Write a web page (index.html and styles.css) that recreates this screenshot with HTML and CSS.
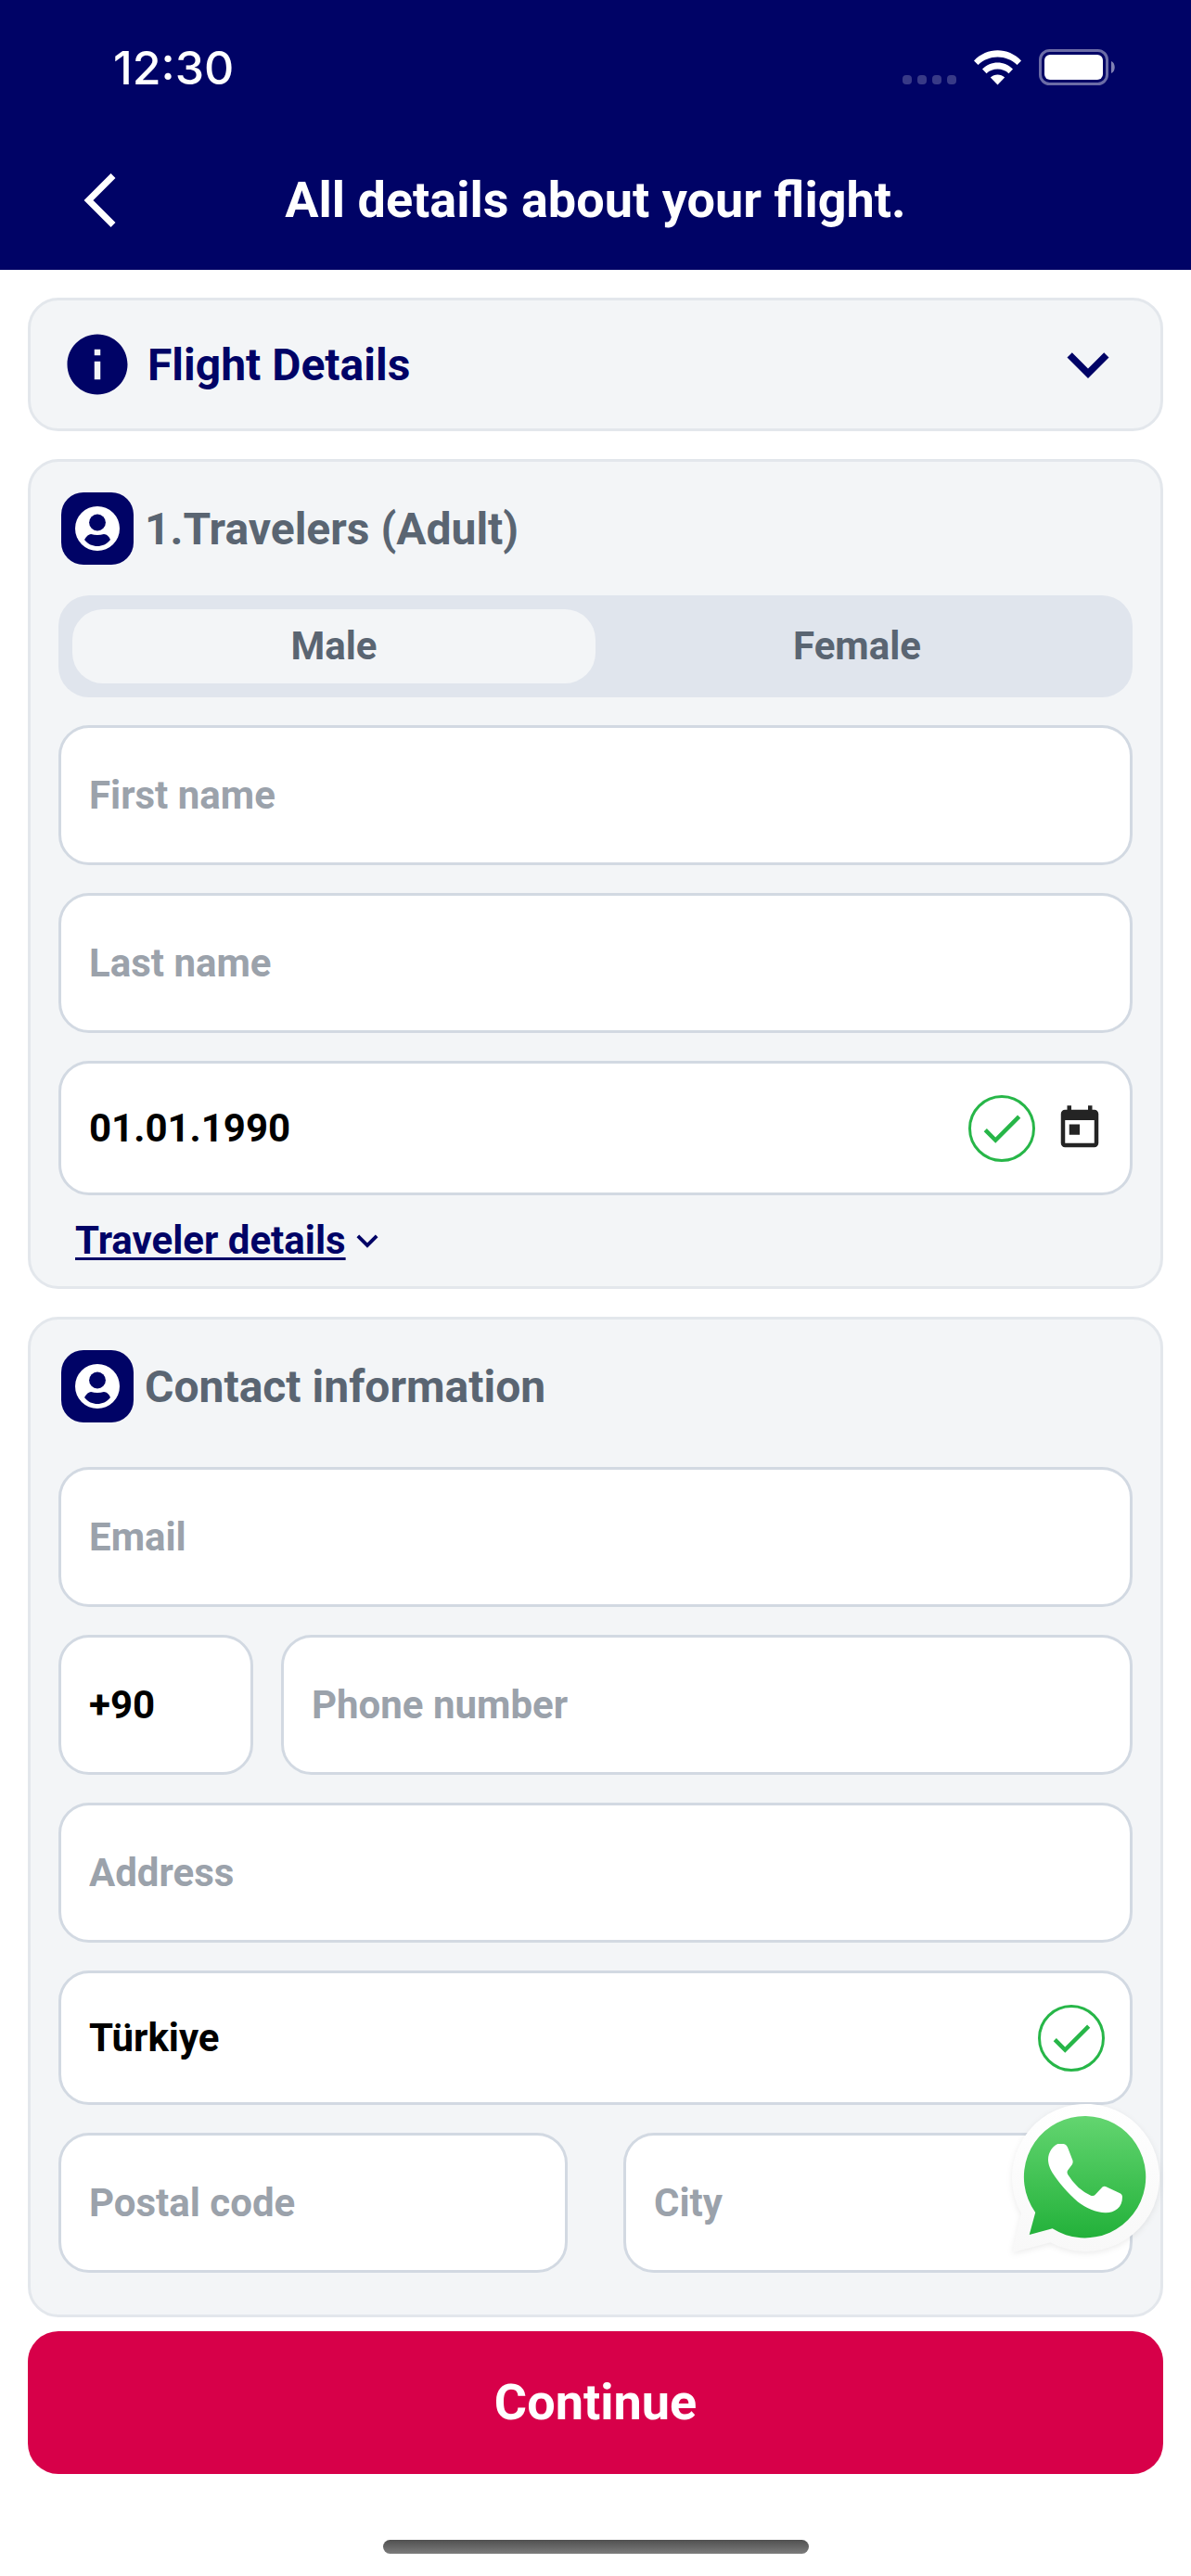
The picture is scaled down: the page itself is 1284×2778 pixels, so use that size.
FILE: index.html
```html
<!DOCTYPE html>
<html lang="en">
<head>
<meta charset="utf-8">
<meta name="viewport" content="width=device-width, initial-scale=1">
<title>Flight details</title>
<link rel="stylesheet" href="styles.css">
</head>
<body>
<header class="header">
  <div class="status">
    <span class="status-time">12:30</span>
    <svg class="status-icons" width="230" height="40" viewBox="0 0 230 40" aria-hidden="true">
      <g fill="#fff" fill-opacity=".22">
        <rect x="0" y="28" width="10" height="10" rx="4"/>
        <rect x="16" y="28" width="10" height="10" rx="4"/>
        <rect x="32" y="28" width="10" height="10" rx="4"/>
        <rect x="48" y="28" width="10" height="10" rx="4"/>
      </g>
      <g fill="#fff">
        <path d="M77 12.500C91 -2.500 114 -2.500 128 12.500L123.500 17C112 5.500 93 5.500 81.500 17Z"/>
        <path d="M86 21.500C95 12 110 12 119 21.500L114.500 26.200C108 20 97 20 90.500 26.200Z"/>
        <path d="M94.800 30.500C99 26.500 106 26.500 110.200 30.500L102.500 38.500Z"/>
        <rect x="153" y="6" width="63" height="27" rx="6"/>
      </g>
      <rect x="148.500" y="1.500" width="72" height="36" rx="10" fill="none" stroke="#fff" stroke-opacity=".42" stroke-width="3"/>
      <path d="M225 13c5 2 5 11 0 13z" fill="#fff" fill-opacity=".5"/>
    </svg>
  </div>
  <div class="titlebar">
    <button class="back" type="button" aria-label="Back">
      <svg width="66" height="66" viewBox="0 0 66 66" aria-hidden="true"><path d="M47 6.500L20.500 33L47 59.500" fill="none" stroke="#fff" stroke-width="7"/></svg>
    </button>
    <h1 class="title">All details about your flight.</h1>
  </div>
</header>

<main class="main">
  <button class="card flight" type="button" aria-expanded="false">
    <svg width="78" height="78" viewBox="0 0 24 24" fill="currentColor" aria-hidden="true"><path d="M12 2C6.480 2 2 6.480 2 12s4.480 10 10 10 10-4.480 10-10S17.520 2 12 2zm1 15h-2v-6h2v6zm0-8h-2V7h2v2z"/></svg>
    <span class="flight-label">Flight Details</span>
    <svg width="90" height="90" viewBox="0 0 24 24" fill="currentColor" aria-hidden="true"><path d="M7.410 8.590L12 13.170l4.590-4.580L18 10l-6 6-6-6z"/></svg>
  </button>

  <section class="card">
    <div class="card-head">
      <svg width="78" height="78" viewBox="0 0 78 78" aria-hidden="true">
        <rect width="78" height="78" rx="24" fill="#000366"/><circle cx="39" cy="39" r="24" fill="#fff"/>
        <circle cx="39" cy="32.500" r="8.900" fill="#000366"/><path d="M25 51C27 47 30 45 32 45Q39 47 46 45C49 45 52 48 53 51C49 56 44 58 39 58C34 58 29 56 25 51Z" fill="#000366"/>
      </svg>
      <h2 class="card-title">1.Travelers (Adult)</h2>
    </div>
    <div class="segment" role="radiogroup" aria-label="Gender">
      <label class="segment-item"><input class="segment-input" type="radio" name="gender" checked><span class="segment-text">Male</span></label>
      <label class="segment-item"><input class="segment-input" type="radio" name="gender"><span class="segment-text">Female</span></label>
    </div>
    <div class="fields">
      <div class="field"><input class="field-input" type="text" placeholder="First name" aria-label="First name"></div>
      <div class="field"><input class="field-input" type="text" placeholder="Last name" aria-label="Last name"></div>
      <div class="field field-filled">
        <input class="field-input" type="text" value="01.01.1990" aria-label="Date of birth">
        <svg width="72" height="72" viewBox="0 0 72 72" aria-hidden="true"><circle cx="36" cy="36" r="34.500" fill="none" stroke="#27b648" stroke-width="3"/><path transform="translate(9 9) scale(2.250)" d="M9 16.170L4.830 12l-1.420 1.410L9 19 21 7l-1.410-1.410z" fill="#27b648"/></svg>
        <button class="icon-button" type="button" aria-label="Open calendar"><svg width="54" height="54" viewBox="0 0 24 24" fill="#242424" aria-hidden="true"><path d="M19 3h-1V1h-2v2H8V1H6v2H5c-1.110 0-1.990.900-1.990 2L3 19c0 1.100.890 2 2 2h14c1.100 0 2-.900 2-2V5c0-1.100-.900-2-2-2zm0 16H5V8h14v11zM7 10h5v5H7z"/></svg></button>
      </div>
    </div>
    <a class="more" href="#traveler-details"><span class="more-text">Traveler details</span><svg width="46" height="46" viewBox="0 0 24 24" fill="currentColor" aria-hidden="true"><path d="M7.410 8.590L12 13.170l4.590-4.580L18 10l-6 6-6-6z"/></svg></a>
  </section>

  <section class="card card-contact">
    <div class="card-head">
      <svg width="78" height="78" viewBox="0 0 78 78" aria-hidden="true">
        <rect width="78" height="78" rx="24" fill="#000366"/><circle cx="39" cy="39" r="24" fill="#fff"/>
        <circle cx="39" cy="32.500" r="8.900" fill="#000366"/><path d="M25 51C27 47 30 45 32 45Q39 47 46 45C49 45 52 48 53 51C49 56 44 58 39 58C34 58 29 56 25 51Z" fill="#000366"/>
      </svg>
      <h2 class="card-title">Contact information</h2>
    </div>
    <div class="fields">
      <div class="field"><input class="field-input" type="email" placeholder="Email" aria-label="Email"></div>
      <div class="phone-row">
        <div class="field"><input class="field-input" type="text" value="+90" aria-label="Country code"></div>
        <div class="field"><input class="field-input" type="tel" placeholder="Phone number" aria-label="Phone number"></div>
      </div>
      <div class="field"><input class="field-input" type="text" placeholder="Address" aria-label="Address"></div>
      <div class="field field-filled">
        <select class="field-input" aria-label="Country"><option>Türkiye</option></select>
        <svg width="72" height="72" viewBox="0 0 72 72" aria-hidden="true"><circle cx="36" cy="36" r="34.500" fill="none" stroke="#27b648" stroke-width="3"/><path transform="translate(9 9) scale(2.250)" d="M9 16.170L4.830 12l-1.420 1.410L9 19 21 7l-1.410-1.410z" fill="#27b648"/></svg>
      </div>
      <div class="city-row">
        <div class="field"><input class="field-input" type="text" placeholder="Postal code" aria-label="Postal code"></div>
        <div class="field"><input class="field-input" type="text" placeholder="City" aria-label="City"></div>
      </div>
    </div>
  </section>
</main>

<footer class="footer">
  <button class="continue" type="submit">Continue</button>
  <div class="home-indicator"></div>
</footer>

<a class="whatsapp" href="#whatsapp" aria-label="Chat on WhatsApp">
  <svg class="whatsapp-icon" width="160" height="164" viewBox="0 0 160 164" aria-hidden="true">
    <defs>
      <linearGradient id="wa-green" x1="0" y1="0" x2="0" y2="1"><stop offset="0" stop-color="#63d570"/><stop offset="1" stop-color="#23b13a"/></linearGradient>
      <linearGradient id="wa-white" x1="0" y1="0" x2="0" y2="1"><stop offset="0" stop-color="#fff"/><stop offset="1" stop-color="#f8f8f8"/></linearGradient>
    </defs>
    <path d="M11 119A79.500 79.500 0 1 1 42.600 150.300L1.200 161Z" fill="url(#wa-white)"/>
    <path d="M26.200 118A65.700 65.700 0 1 1 44.600 135.300L19.700 142Z" fill="url(#wa-green)"/>
    <path d="M50.400 44H56.500Q60 44.500 61.500 49L66.500 62Q67 64 66 66L60.800 73Q60 75 61.200 77Q71 93 86 99.700Q89 100.700 91 98.500L98.500 90.500Q100 89.300 102 90L118 97.500Q120 98.500 120 101C120 113 112 118 102 118.300C92 118 80 113 72 106.500C62 98 50 84 44.500 75C41 69 40 64 40 61C40 53 45 46 50.400 44Z" fill="#fff"/>
  </svg>
</a>
</body>
</html>
```
FILE: styles.css
```css
:root {
  --navy: #000366;
  --slate: #5a6572;
  --panel: #f3f5f7;
  --panel-line: #e3e7ec;
  --field-line: #d2d9e2;
}

* { box-sizing: border-box; }

body {
  margin: 0;
  min-height: 100vh;
  display: flex;
  flex-direction: column;
  background: #fff;
  color: #000;
  font-family: Roboto, sans-serif;
  font-weight: 700;
  font-size: 42px;
  line-height: 48px;
}

button,
input,
select {
  margin: 0;
  padding: 0;
  border: 0;
  background: none;
  color: inherit;
  font: inherit;
}

svg { display: block; flex: none; }

.header {
  padding-bottom: 30px;
  background: var(--navy);
  color: #fff;
}

.status {
  display: flex;
  align-items: center;
  justify-content: space-between;
  height: 146px;
  padding: 0 81px 0 122px;
}

.status-time {
  font-family: Inter, sans-serif;
  font-size: 50px;
  font-weight: 500;
}

.titlebar {
  display: grid;
  grid-template-columns: 66px 1fr 66px;
  align-items: center;
  padding: 37px 75px 12px;
}

.title {
  margin: 0;
  font-size: 54px;
  font-weight: 700;
  line-height: 66px;
  text-align: center;
}

.main {
  display: flex;
  flex-direction: column;
  gap: 30px;
  padding: 30px 30px 0;
}

.card {
  padding: 33px 30px 26px;
  border: 3px solid var(--panel-line);
  border-radius: 33px;
  background: var(--panel);
}

.flight {
  display: flex;
  align-items: center;
  gap: 15px;
  padding: 24px 33px;
  color: var(--navy);
  font-size: 48px;
  text-align: left;
}

.flight-label {
  flex: 1;
  padding-top: 2px;
}

.card-head {
  display: flex;
  align-items: center;
  gap: 12px;
  margin-bottom: 33px;
  padding-left: 3px;
}

.card-title {
  margin: 0;
  padding-top: 2px;
  color: var(--slate);
  font-size: 48px;
  font-weight: 700;
}

.segment {
  display: grid;
  grid-template-columns: 1fr 1fr;
  margin-bottom: 30px;
  padding: 15px;
  border-radius: 33px;
  background: #e0e5ed;
  color: var(--slate);
  text-align: center;
}

.segment-item { display: block; }

.segment-input {
  position: absolute;
  opacity: 0;
}

.segment-text {
  display: block;
  padding: 16px 0;
  border-radius: 33px;
}

.segment-input:checked + .segment-text { background: var(--panel); }

.fields {
  display: grid;
  gap: 30px;
}

.field {
  display: flex;
  align-items: center;
  min-width: 0;
  min-height: 151px;
  padding: 0 27px 0 30px;
  border: 3px solid var(--field-line);
  border-radius: 33px;
  background: #fff;
}

.field-filled {
  gap: 21px;
  min-height: 145px;
}

.field-input {
  flex: 1;
  min-width: 0;
  width: 100%;
  height: 60px;
  outline: 0;
  appearance: none;
}

.field-input::placeholder {
  color: #9ba2ab;
  opacity: 1;
}

.icon-button { cursor: pointer; }

.more {
  display: flex;
  align-items: center;
  width: max-content;
  margin-top: 26px;
  padding-left: 18px;
  color: var(--navy);
  line-height: 46px;
  text-decoration: none;
}

.more-text {
  text-decoration: underline;
  text-decoration-thickness: 3px;
  text-underline-offset: 4px;
}

.card-contact { padding-bottom: 45px; }

.card-contact .card-head { margin-bottom: 48px; }

.phone-row {
  display: grid;
  grid-template-columns: 210px 1fr;
  gap: 30px;
}

.city-row {
  display: grid;
  grid-template-columns: 1fr 1fr;
  gap: 60px;
}

.footer {
  padding: 15px 30px 24px;
}

.continue {
  display: block;
  width: 100%;
  min-height: 154px;
  border-radius: 33px;
  background: #d70049;
  color: #fff;
  font-size: 54px;
}

.home-indicator {
  width: 459px;
  height: 15px;
  margin: 71px auto 0;
  border-radius: 8px;
  background: linear-gradient(#505050, #7c7c7c);
}

.whatsapp {
  position: fixed;
  right: 34px;
  bottom: 346px;
}

.whatsapp-icon { filter: drop-shadow(0 2px 3px rgba(0, 0, 0, 0.08)); }
```
